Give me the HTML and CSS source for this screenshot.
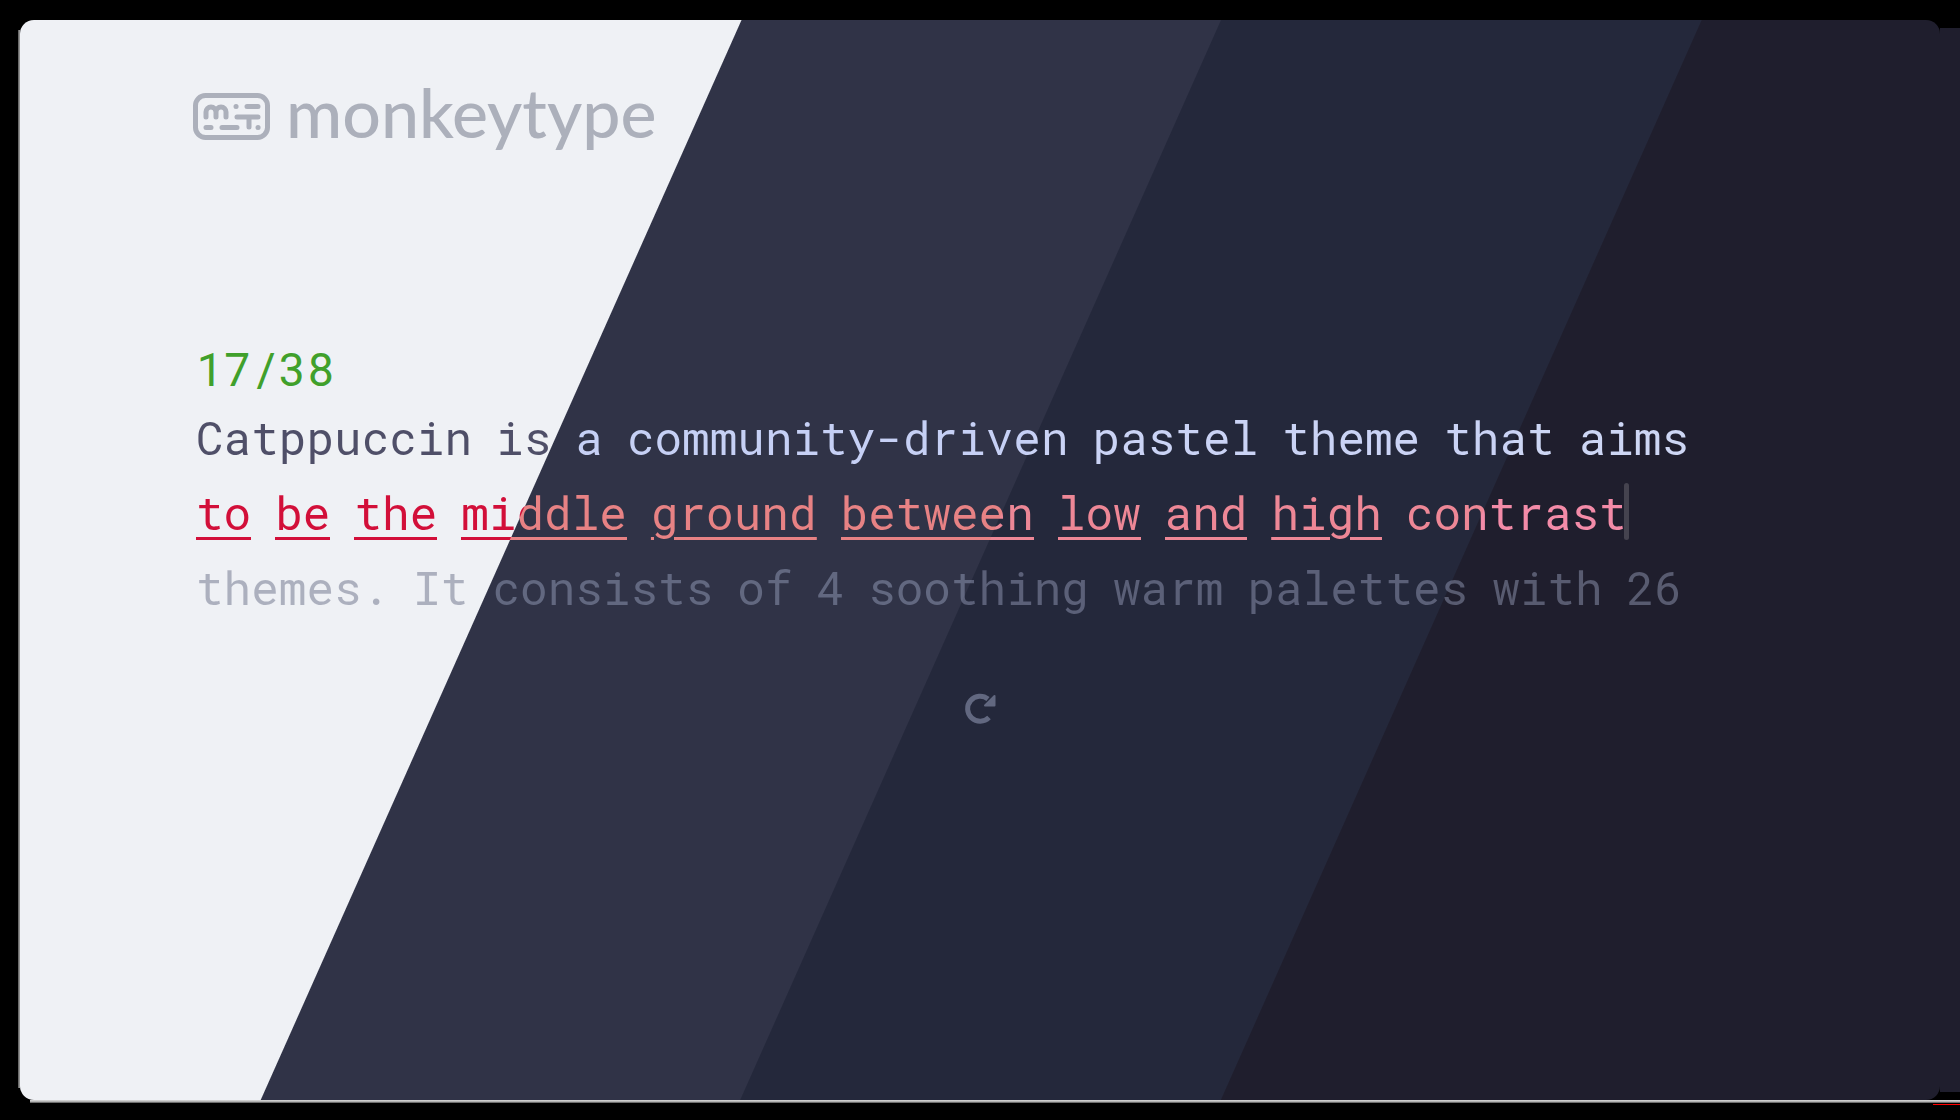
FILE: index.html
```html
<!DOCTYPE html>
<html lang="en">
<head>
<meta charset="utf-8">
<title>monkeytype</title>
<link rel="stylesheet" href="styles.css">
</head>
<body>
<div class="frame">
<main class="stage">
  <header class="brand">
    <svg class="brand-icon" viewBox="0 0 78 48" fill="none" stroke="currentColor" stroke-linecap="round" stroke-linejoin="round" aria-hidden="true">
      <rect x="2.5" y="3.500" width="72" height="42" rx="10" stroke-width="5"/>
      <path stroke-width="5" d="M13 25v-5a5 5 0 0 1 10 0v5M23 20a5 5 0 0 1 10 0v5M43 14.5h.1M54 14.5h11M44 25h21M56 25v10M13 35.500h5M29 35.500h15M65 35.500h.1"/>
    </svg>
    <h1 class="brand-name">monkeytype</h1>
  </header>
  <section class="test">
    <div class="counter">17/38</div>
    <div class="words">
      <p class="line typed"><span>Catppuccin</span><span>is</span><span>a</span><span>community-driven</span><span>pastel</span><span>theme</span><span>that</span><span>aims</span></p>
      <p class="line wrong"><span class="ruled">to</span><span class="ruled">be</span><span class="ruled">the</span><span class="ruled">middle</span><span class="skip-frappe">ground</span><span class="ruled">between</span><span class="ruled">low</span><span class="ruled">and</span><span class="skip-macchiato">high</span><span class="current">contrast</span></p>
      <p class="line pending"><span>themes.</span><span>It</span><span>consists</span><span>of</span><span>4</span><span>soothing</span><span>warm</span><span>palettes</span><span>with</span><span>26</span></p>
    </div>
  </section>
  <button class="restart" type="button" aria-label="Restart test">
    <svg viewBox="0 0 32 32" fill="none" aria-hidden="true">
      <path d="M25 25.500A12.500 12.500 0 1 1 24 7" stroke="currentColor" stroke-width="5"/>
      <path d="M30.500 4v9.500H21z" fill="currentColor" stroke="currentColor" stroke-width="2" stroke-linejoin="round"/>
    </svg>
  </button>
  <div class="edge edge-left"></div>
  <div class="edge edge-right"></div>
  <div class="edge edge-bottom"></div>
  <div class="edge edge-mark"></div>
</main>
</div>
</body>
</html>
```
FILE: styles.css
```css
:root {
  --latte: #eff1f5;
  --frappe: #303347;
  --macchiato: #24283b;
  --mocha: #1f1e2d;
}

* { box-sizing: border-box; margin: 0; }

body { background: #000; }

.frame {
  min-height: 100vh;
  padding: 20px;
  overflow: hidden;
}

.stage,
.line span,
.ruled::after {
  background-image: linear-gradient(114deg,
    var(--c1) 30.5%, var(--c2) calc(30.5% + 1px) 50%,
    var(--c3) calc(50% + 1px) 69.55%, var(--c4) calc(69.55% + 1px));
  background-attachment: fixed;
}

.stage {
  --c1: var(--latte);
  --c2: var(--frappe);
  --c3: var(--macchiato);
  --c4: var(--mocha);
  position: relative;
  display: flex;
  flex-direction: column;
  min-height: calc(100vh - 40px);
  padding: 56px 176px;
  border-radius: 14px;
}

.brand {
  display: flex;
  align-items: center;
  gap: 15px;
  margin-left: -3px;
  height: 80px;
  color: #acb0bb;
}

.brand-icon { width: 78px; height: 48px; }

.brand-name {
  padding-bottom: 8px;
  font: 500 68px/80px Lato, sans-serif;
}

.test {
  margin-top: 175px;
  font: 46px/75px "Roboto Mono", "DejaVu Sans Mono", monospace;
}

.counter {
  height: 69px;
  color: #40a02b;
}

.line {
  display: flex;
  gap: 24px;
  height: 75px;
  white-space: nowrap;
}

.line span {
  -webkit-background-clip: text;
  background-clip: text;
  -webkit-text-fill-color: transparent;
}

.typed { --c1: #4f4f68; --c2: #c6d0f5; --c3: #cad3f5; --c4: #cdd6f4; }
.wrong { --c1: #d20f39; --c2: #e78284; --c3: #ed8796; --c4: #f38ba8; }
.pending { --c1: #acb0be; --c2: #626880; --c3: #5b6078; --c4: #585b70; }

.ruled::after {
  content: "";
  display: block;
  height: 3px;
  margin-top: -13px;
}

.skip-frappe,
.skip-macchiato {
  text-decoration: underline 3px var(--c2);
  text-underline-offset: 7px;
}

.skip-macchiato { text-decoration-color: var(--c3); }

.current { position: relative; }

.current::after {
  content: "";
  position: absolute;
  top: 8px;
  right: -2px;
  width: 5px;
  height: 57px;
  border-radius: 3px;
  background: #45434f;
}

.restart {
  align-self: center;
  width: 32px;
  height: 32px;
  margin-top: 67px;
  padding: 0;
  border: 0;
  background: none;
  color: #626880;
}

.restart svg { display: block; width: 32px; height: 32px; }

/* Window rim, drawn outside the rounded stage */
.edge { position: absolute; }

.edge-left {
  top: 10px;
  bottom: 12px;
  left: -2px;
  width: 2px;
  background: linear-gradient(90deg, #555, #aaa);
}

.edge-right {
  top: 8px;
  right: -20px;
  bottom: 8px;
  width: 20px;
  background: var(--mocha);
}

.edge-bottom {
  left: 10px;
  right: -20px;
  bottom: -3px;
  height: 3px;
  background: linear-gradient(#ddd, #aaa 60%, #444);
}

.edge-mark {
  right: -20px;
  bottom: -5px;
  width: 27px;
  height: 1px;
  background: #f00;
}
```
